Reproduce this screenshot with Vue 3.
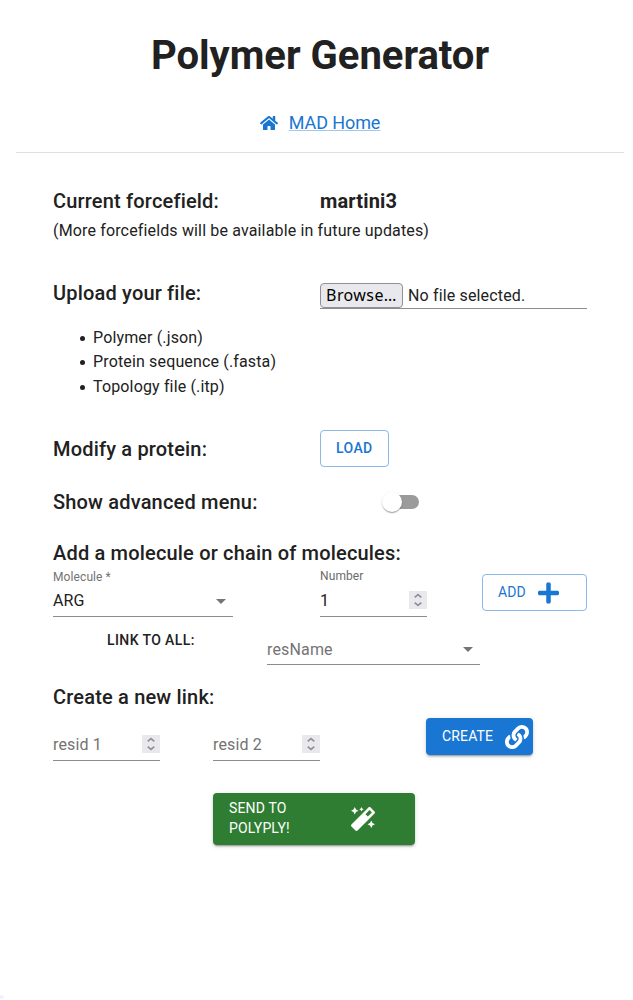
<script setup>
import { ref } from 'vue'

const formats = ['Polymer (.json)', 'Protein sequence (.fasta)', 'Topology file (.itp)']
const molecule = ref('ARG')
const count = ref(1)
const advanced = ref(false)
</script>

<template>
  <main class="page">
    <header class="header">
      <h1>Polymer Generator</h1>
      <nav class="home">
        <svg class="icon-home" viewBox="0 0 576 512"><path d="M280.37 148.26L96 300.11V464a16 16 0 0 0 16 16l112.06-.29a16 16 0 0 0 15.92-16V368a16 16 0 0 1 16-16h64a16 16 0 0 1 16 16v95.64a16 16 0 0 0 16 16.05L464 480a16 16 0 0 0 16-16V300L295.67 148.26a12.19 12.19 0 0 0-15.3 0zM571.6 251.47L488 182.56V44.05a12 12 0 0 0-12-12h-56a12 12 0 0 0-12 12v72.61L318.47 43a48 48 0 0 0-61 0L4.34 251.47a12 12 0 0 0-1.6 16.9l25.5 31A12 12 0 0 0 45.15 301l235.22-193.74a12.19 12.19 0 0 1 15.3 0L530.9 301a12 12 0 0 0 16.9-1.6l25.5-31a12 12 0 0 0-1.7-16.93z" /></svg>
        <a href="#">MAD Home</a>
      </nav>
    </header>

    <div class="form">
      <section class="row forcefield">
        <h2>Current forcefield:</h2>
        <h2 class="strong">martini3</h2>
        <p class="note">(More forcefields will be available in future updates)</p>
      </section>

      <section class="row upload">
        <h2>Upload your file:</h2>
        <div class="file">
          <span class="browse">Browse…</span>
          <span>No file selected.</span>
        </div>
      </section>
      <ul class="formats">
        <li v-for="f in formats" :key="f">{{ f }}</li>
      </ul>

      <section class="row protein">
        <h2>Modify a protein:</h2>
        <button class="btn outlined load">Load</button>
      </section>

      <section class="row advanced">
        <h2>Show advanced menu:</h2>
        <button class="switch" :class="{ on: advanced }" @click="advanced = !advanced">
          <span class="thumb"></span>
        </button>
      </section>

      <h2 class="wide">Add a molecule or chain of molecules:</h2>
      <section class="molecule">
        <div class="field">
          <label>Molecule<span class="star">*</span></label>
          <div class="control">
            <span>{{ molecule }}</span>
            <svg class="caret" viewBox="0 0 24 24"><path d="M7 10l5 5 5-5z" /></svg>
          </div>
        </div>
        <div class="field number">
          <label>Number</label>
          <div class="control">
            <span>{{ count }}</span>
            <svg class="spin" viewBox="0 0 18 18"><path d="M5.7 6.3L9 3.5l3.3 2.8M5.7 11.7L9 14.5l3.3-2.8" /></svg>
          </div>
        </div>
        <button class="btn outlined add">
          <span>Add</span>
          <svg viewBox="0 0 448 512"><path d="M416 208H272V64c0-17.67-14.33-32-32-32h-32c-17.67 0-32 14.33-32 32v144H32c-17.67 0-32 14.33-32 32v32c0 17.67 14.33 32 32 32h144v144c0 17.67 14.33 32 32 32h32c17.67 0 32-14.33 32-32V304h144c17.67 0 32-14.33 32-32v-32c0-17.67-14.33-32-32-32z" /></svg>
        </button>
      </section>

      <section class="link-all">
        <span class="link-label">Link to all:</span>
        <div class="control empty res">
          <span>resName</span>
          <svg class="caret" viewBox="0 0 24 24"><path d="M7 10l5 5 5-5z" /></svg>
        </div>
      </section>

      <h2 class="link-title">Create a new link:</h2>
      <section class="new-link">
        <div v-for="n in 2" :key="n" class="control empty resid">
          <span>resid {{ n }}</span>
          <svg class="spin" viewBox="0 0 18 18"><path d="M5.7 6.3L9 3.5l3.3 2.8M5.7 11.7L9 14.5l3.3-2.8" /></svg>
        </div>
        <button class="btn filled create">
          <span>Create</span>
          <svg viewBox="0 0 512 512"><path d="M326.612 185.391c59.747 59.809 58.927 155.698.36 214.59-.11.12-.24.25-.36.37l-67.2 67.2c-59.27 59.27-155.699 59.262-214.96 0-59.27-59.26-59.27-155.7 0-214.96l37.106-37.106c9.84-9.84 26.786-3.3 27.294 10.606.648 17.722 3.826 35.527 9.69 52.721 1.986 5.822.567 12.262-3.783 16.612l-13.087 13.087c-28.026 28.026-28.905 73.66-1.155 101.96 28.024 28.579 74.086 28.749 102.325.51l67.2-67.19c28.191-28.191 28.073-73.757 0-101.83-3.701-3.694-7.429-6.564-10.341-8.569a16.037 16.037 0 0 1-6.947-12.606c-.396-10.567 3.348-21.456 11.698-29.806l21.054-21.055c5.521-5.521 14.182-6.199 20.584-1.731a152.482 152.482 0 0 1 20.522 17.197zM467.547 44.449c-59.261-59.262-155.69-59.27-214.96 0l-67.2 67.2c-.12.12-.25.25-.36.37-58.566 58.892-59.387 154.781.36 214.59a152.454 152.454 0 0 0 20.521 17.196c6.402 4.468 15.064 3.789 20.584-1.731l21.054-21.055c8.35-8.35 12.094-19.239 11.698-29.806a16.037 16.037 0 0 0-6.947-12.606c-2.912-2.005-6.64-4.875-10.341-8.569-28.073-28.073-28.191-73.639 0-101.83l67.2-67.19c28.239-28.239 74.3-28.069 102.325.51 27.75 28.3 26.872 73.934-1.155 101.96l-13.087 13.087c-4.35 4.35-5.769 10.79-3.783 16.612 5.864 17.194 9.042 34.999 9.69 52.721.509 13.906 17.454 20.446 27.294 10.606l37.106-37.106c59.271-59.259 59.271-155.699.001-214.959z" /></svg>
        </button>
      </section>

      <button class="btn filled send">
        <span>Send to<br />Polyply!</span>
        <svg viewBox="0 0 512 512"><path d="M224 96l16-32 32-16-32-16-16-32-16 32-32 16 32 16 16 32zM80 160l26.66-53.33L160 80l-53.34-26.67L80 0 53.34 53.33 0 80l53.34 26.67L80 160zm352 128l-26.66 53.33L352 368l53.34 26.67L432 448l26.66-53.33L512 368l-53.34-26.67L432 288zm70.62-193.77L417.77 9.38C411.53 3.12 403.34 0 395.15 0c-8.19 0-16.38 3.12-22.63 9.38L9.38 372.52c-12.5 12.5-12.5 32.76 0 45.25l84.85 84.85c6.25 6.25 14.44 9.37 22.62 9.37 8.19 0 16.38-3.12 22.63-9.37l363.14-363.15c12.5-12.48 12.5-32.75 0-45.24zM359.45 203.46l-50.91-50.91 86.6-86.6 50.91 50.91-86.6 86.6z" /></svg>
      </button>
    </div>
    <span class="corner"></span>
  </main>
</template>

<style>
body {
  margin: 0;
  background: #fff;
}
</style>

<style scoped>
.page {
  position: relative;
  box-sizing: border-box;
  height: 1000px;
  padding: 0 9px 0 16px;
  overflow: hidden;
  font-family: Roboto, sans-serif;
  font-size: 16px;
  line-height: 24px;
  letter-spacing: 0.15px;
  color: #212121;
}
.header {
  box-sizing: border-box;
  height: 153px;
  padding-top: 32px;
  border-bottom: 1px solid #e0e0e0;
  text-align: center;
}
h1 {
  margin: 0;
  font-size: 40px;
  font-weight: 700;
  line-height: 48px;
  letter-spacing: 0;
}
.home {
  display: flex;
  justify-content: center;
  align-items: center;
  gap: 11px;
  margin-top: 31px;
  font-size: 18px;
  letter-spacing: -0.1px;
}
.home a {
  color: #1976d2;
  text-decoration-color: rgba(25, 118, 210, 0.4);
}
.icon-home {
  width: 18px;
  height: 16px;
  fill: #1976d2;
}
.form {
  width: 534px;
  padding: 32px 0 0 37px;
}
h2 {
  margin: 0;
  font-size: 20px;
  font-weight: 500;
  line-height: 32px;
  letter-spacing: 0.18px;
}
h2.strong {
  font-weight: 700;
  letter-spacing: 0.15px;
}
.row {
  display: grid;
  grid-template-columns: 267px 267px;
}
.note {
  grid-column: 1 / 3;
  margin: 2px 0 0;
}
.upload {
  height: 32px;
  margin-top: 34px;
}
.file {
  display: flex;
  box-sizing: border-box;
  align-items: center;
  gap: 5px;
  height: 26px;
  margin-top: 6px;
  border-bottom: 1px solid #8c8c8c;
}
.browse {
  box-sizing: border-box;
  width: 83px;
  height: 25px;
  border: 1px solid #8f8f9d;
  border-radius: 4px;
  background: #e9e9ed;
  color: #000;
  font-family: "Noto Sans", sans-serif;
  line-height: 23px;
  letter-spacing: 0.4px;
  text-align: center;
}
.formats {
  height: 74px;
  margin: 17px 0 0;
  padding-left: 40px;
  line-height: 24.4px;
  list-style: none;
}
.formats li::before {
  content: "";
  display: inline-block;
  width: 5px;
  height: 5px;
  margin: 0 8px 2px -13px;
  border-radius: 50%;
  background: #212121;
}
.protein {
  margin-top: 30px;
  align-items: center;
}
.protein h2 {
  padding-top: 1px;
}
.btn {
  display: flex;
  box-sizing: border-box;
  align-items: center;
  height: 37px;
  padding: 0 15px;
  border: 0;
  border-radius: 4px;
  font: 400 14px/20px Roboto, sans-serif;
  letter-spacing: 0.15px;
  text-align: left;
  text-transform: uppercase;
}
.outlined {
  border: 1px solid rgba(25, 118, 210, 0.5);
  background: transparent;
  color: #1976d2;
}
.filled {
  background: #1976d2;
  color: #fff;
  box-shadow: 0 3px 1px -2px rgba(0, 0, 0, 0.2), 0 2px 2px rgba(0, 0, 0, 0.14), 0 1px 5px rgba(0, 0, 0, 0.12);
}
.btn svg {
  fill: currentColor;
}
.load {
  width: 69px;
  padding-bottom: 1px;
  font-weight: 500;
  letter-spacing: 0.4px;
}
.advanced {
  margin: 19px 0;
  align-items: center;
}
.switch {
  display: flex;
  align-items: center;
  width: 34px;
  height: 14px;
  margin-left: 65px;
  padding: 0;
  border: 0;
  border-radius: 7px;
  background: #9b9b9b;
}
.switch.on {
  justify-content: flex-end;
}
.thumb {
  flex: none;
  width: 20px;
  height: 20px;
  margin: 0 -3px;
  border-radius: 50%;
  background: #fff;
  box-shadow: 0 2px 1px -1px rgba(0, 0, 0, 0.2), 0 1px 1px rgba(0, 0, 0, 0.14), 0 1px 3px rgba(0, 0, 0, 0.12);
}
.molecule {
  display: grid;
  grid-template-columns: 180px 107px 105px;
  column-gap: 87px;
  height: 48px;
}
.field.number {
  width: 107px;
}
label {
  display: block;
  height: 16px;
  font-size: 12px;
  line-height: 16px;
  letter-spacing: 0.1px;
  color: #737373;
}
.number label {
  height: 16px;
  line-height: 14px;
  color: #6b6b6b;
}
.star {
  margin-left: 3px;
}
.control {
  display: flex;
  box-sizing: border-box;
  justify-content: space-between;
  align-items: center;
  height: 32px;
  border-bottom: 1px solid #8c8c8c;
}
.control span {
  padding-top: 1px;
}
.empty {
  color: #737373;
}
.caret {
  width: 24px;
  height: 24px;
  margin-top: 1px;
  fill: #757575;
}
.spin {
  width: 18px;
  height: 18px;
  margin-bottom: 1px;
  background: #e9e9ed;
  fill: none;
  stroke: #8f8f9d;
  stroke-width: 1.7;
}
.add {
  width: 105px;
  margin: 5px 0 0 -32px;
  padding-bottom: 1px;
  gap: 12px;
}
.add svg {
  width: 21px;
  height: 24px;
  margin-top: 2px;
}
.link-all {
  display: flex;
  height: 48px;
  padding-left: 54px;
}
.link-label {
  width: 160px;
  padding-top: 11px;
  font-size: 14px;
  font-weight: 500;
  letter-spacing: 0.4px;
  text-transform: uppercase;
}
.res {
  width: 213px;
  margin-top: 16px;
}
.control.res span {
  padding-top: 3px;
}
.link-title {
  margin-top: 16px;
}
.new-link {
  display: flex;
  gap: 53px;
  height: 48px;
}
.resid {
  width: 107px;
  margin-top: 16px;
}
.create {
  width: 107px;
  margin: 5px 0 0 53px;
  padding: 0 0 1px 16px;
  gap: 12px;
}
.create svg {
  flex: none;
  width: 24px;
  height: 24px;
  margin-top: 2px;
}
.send {
  width: 202px;
  height: 52px;
  margin: 32px 0 0 160px;
  padding: 0 39px 0 16px;
  justify-content: space-between;
  background: #2e7d32;
}
.send span {
  padding-bottom: 2px;
}
.send svg {
  width: 24px;
  height: 24px;
  margin-right: 1px;
}
.corner {
  position: absolute;
  bottom: 1px;
  left: 0;
  width: 4px;
  height: 4px;
  border-radius: 0 2px 2px 0;
  background: #edf4ff;
}
</style>
